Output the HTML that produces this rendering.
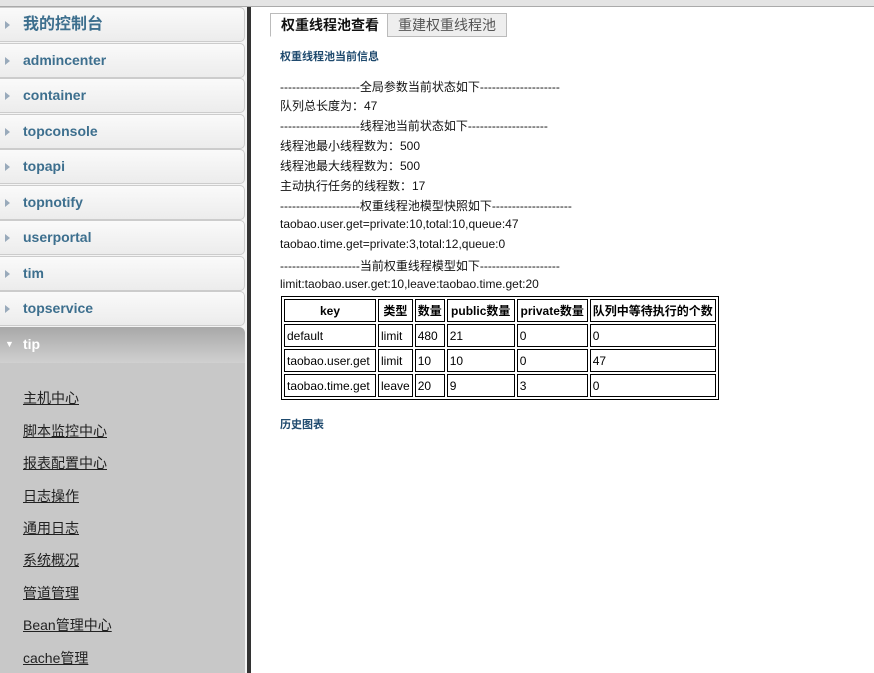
<!DOCTYPE html>
<html><head><meta charset="utf-8"><style>
body{margin:0;width:874px;height:673px;overflow:hidden;background:#fff;font-family:"Liberation Sans","Noto Sans CJK SC",sans-serif;position:relative}
.top{position:absolute;left:0;top:0;width:874px;height:6px;background:#e4e4e4;border-bottom:1px solid #aaa}
.side{position:absolute;left:0;top:7px;width:247px;height:666px;background:#f4f4f4}
.vb{position:absolute;left:247px;top:7px;width:4px;height:666px;background:#333}
.item{position:absolute;left:0;width:244px;height:33px;border:1px solid #ccc;border-left:none;border-radius:0 5px 5px 0;background:linear-gradient(#fafafa,#ececec);color:#3d6f8e;font-weight:bold;font-size:14px;line-height:33px}
.item span{position:absolute;left:23px}
.item i{position:absolute;left:5px;top:13px;border-left:5px solid #9ab;border-top:4px solid transparent;border-bottom:4px solid transparent}
.tiph{position:absolute;left:0;top:327px;width:245px;height:36px;border-radius:0 6px 0 0;background:linear-gradient(#a8a8a8,#d0d0d0);color:#fff;font-weight:bold;font-size:14px;line-height:34px}
.tipb{position:absolute;left:0;top:363px;width:245px;height:310px;background:#c8c8c8}
.lk{position:absolute;left:23px;font-size:14px;color:#222;text-decoration:underline}
.tab{position:absolute;top:13px;height:22px;line-height:22px;font-size:14px;font-weight:bold;padding:0 10px;border:1px solid #bbb}
.t{position:absolute;left:280px;font-size:12px;color:#111;white-space:nowrap}
table{position:absolute;left:281px;top:296px;border:1px solid #000;border-spacing:2px;font-size:12px}
td{border:1px solid #000;height:21px;padding:0 2px}
th{border:1px solid #000;height:21px;font-size:12px;padding:0 2px}
</style></head><body>
<div class="top"></div>
<div class="side"></div>
<div class="vb"></div>
<div class="item" style="top:7px;font-size:16px"><i></i><span>我的控制台</span></div>
<div class="item" style="top:43px"><i></i><span>admincenter</span></div>
<div class="item" style="top:78px"><i></i><span>container</span></div>
<div class="item" style="top:114px"><i></i><span>topconsole</span></div>
<div class="item" style="top:149px"><i></i><span>topapi</span></div>
<div class="item" style="top:185px"><i></i><span>topnotify</span></div>
<div class="item" style="top:220px"><i></i><span>userportal</span></div>
<div class="item" style="top:256px"><i></i><span>tim</span></div>
<div class="item" style="top:291px"><i></i><span>topservice</span></div>
<div class="tiph"><span style="position:absolute;left:5px;top:0;font-size:9px">▼</span><span style="position:absolute;left:23px">tip</span></div>
<div class="tipb"></div>
<a class="lk" style="top:388px">主机中心</a>
<a class="lk" style="top:421px">脚本监控中心</a>
<a class="lk" style="top:453px">报表配置中心</a>
<a class="lk" style="top:486px">日志操作</a>
<a class="lk" style="top:518px">通用日志</a>
<a class="lk" style="top:550px">系统概况</a>
<a class="lk" style="top:583px">管道管理</a>
<a class="lk" style="top:615px">Bean管理中心</a>
<a class="lk" style="top:648px">cache管理</a>
<div class="tab" style="left:270px;background:#fff;border-bottom-color:#fff;color:#111">权重线程池查看</div>
<div class="tab" style="left:387px;background:#eee;color:#555;font-weight:normal">重建权重线程池</div>
<div class="t" style="top:48px;font-weight:bold;color:#1f4a6e;font-size:11px">权重线程池当前信息</div>
<div class="t" style="top:78px">--------------------全局参数当前状态如下--------------------</div>
<div class="t" style="top:97px">队列总长度为：47</div>
<div class="t" style="top:117px">--------------------线程池当前状态如下--------------------</div>
<div class="t" style="top:137px">线程池最小线程数为：500</div>
<div class="t" style="top:157px">线程池最大线程数为：500</div>
<div class="t" style="top:177px">主动执行任务的线程数：17</div>
<div class="t" style="top:197px">--------------------权重线程池模型快照如下--------------------</div>
<div class="t" style="top:217px">taobao.user.get=private:10,total:10,queue:47</div>
<div class="t" style="top:237px">taobao.time.get=private:3,total:12,queue:0</div>
<div class="t" style="top:257px">--------------------当前权重线程模型如下--------------------</div>
<div class="t" style="top:277px">limit:taobao.user.get:10,leave:taobao.time.get:20</div>
<table>
<tr><th style="width:86px;font-weight:bold">key</th><th>类型</th><th>数量</th><th style="width:62px">public数量</th><th style="width:65px">private数量</th><th>队列中等待执行的个数</th></tr>
<tr><td>default</td><td>limit</td><td>480</td><td>21</td><td>0</td><td>0</td></tr>
<tr><td>taobao.user.get</td><td>limit</td><td>10</td><td>10</td><td>0</td><td>47</td></tr>
<tr><td>taobao.time.get</td><td>leave</td><td>20</td><td>9</td><td>3</td><td>0</td></tr>
</table>
<div class="t" style="top:416px;font-weight:bold;color:#1f4a6e;font-size:11px">历史图表</div>
</body></html>
